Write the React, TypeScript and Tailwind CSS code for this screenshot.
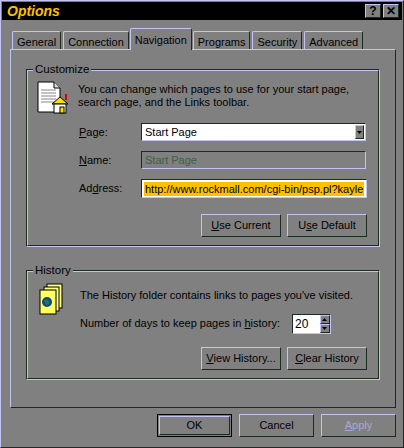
import React from 'react';

const raised = 'border border-t-[#c4c4f4] border-l-[#c4c4f4] border-b-[#1c2c1c] border-r-[#1c2c1c]';
const sunken = 'border border-t-[#1c2c1c] border-l-[#1c2c1c] border-b-[#c4c4f4] border-r-[#c4c4f4]';

const U: React.FC<{ t: string; i: number }> = ({ t, i }) => (
  <>
    {t.slice(0, i)}
    <span className="underline underline-offset-1">{t[i]}</span>
    {t.slice(i + 1)}
  </>
);

const Btn: React.FC<{ children: React.ReactNode; w?: string; bold?: boolean; dim?: boolean }> = ({ children, w = 'w-[80px]', bold, dim }) => (
  <div className={`${w} h-[23px] ${bold ? 'border border-black p-px' : ''}`}>
    <div className={`flex h-full w-full items-center justify-center ${raised} ${dim ? 'text-[#a8a8d8]' : 'text-black'}`}>
      {children}
    </div>
  </div>
);

const Group: React.FC<{ title: string; children: React.ReactNode; h: string }> = ({ title, children, h }) => (
  <div className={`relative ${h} ${sunken}`}>
    <div className={`h-full w-full ${raised}`}>{children}</div>
    <span className="absolute -top-[9px] left-[6px] bg-[#808080] px-[2px] text-[11.5px] leading-[16px]">{title}</span>
  </div>
);

const PageIcon = () => (
  <svg width="34" height="36" viewBox="0 0 34 36">
    <path d="M2 2h16l6 6v24H2z" fill="#fff" stroke="#000" />
    <path d="M18 2v6h6" fill="#ddd" stroke="#000" />
    {[10, 13, 16, 19, 22].map((y) => (
      <line key={y} x1="5" y1={y} x2="20" y2={y} stroke="#888" />
    ))}
    <path d="M16 24l8-7 8 7z" fill="#ffe000" stroke="#000" />
    <rect x="18" y="24" width="12" height="9" fill="#fff" stroke="#000" />
    <rect x="24" y="27" width="4" height="6" fill="#ffe000" stroke="#000" />
    <rect x="29" y="14" width="2" height="6" fill="#e00000" />
  </svg>
);

const HistIcon = () => (
  <svg width="28" height="32" viewBox="0 0 28 32">
    <rect x="9" y="1" width="15" height="24" fill="#ffff80" stroke="#000" />
    <rect x="6" y="4" width="15" height="24" fill="#ffff80" stroke="#000" />
    <rect x="2" y="7" width="16" height="24" fill="#ffff60" stroke="#000" />
    <circle cx="9" cy="19" r="5" fill="#1040a0" />
    <path d="M6 17c2-2 4 0 5 1s0 4-2 4-2-3-3-5z" fill="#208030" />
  </svg>
);

export default function App() {
  return (
    <div className="h-[448px] w-[404px] overflow-hidden bg-[#808080] text-[11px] text-black" style={{ fontFamily: '"Liberation Sans", Arial, sans-serif' }}>
      <div className={`h-[448px] p-px ${raised}`}>
        {/* title */}
        <div className="flex h-[18px] items-center justify-between bg-black pl-[5px] pr-[3px]">
          <span className="text-[14px] font-bold italic text-[#ffc000]">Options</span>
          <div className="flex gap-[2px]">
            <div className={`flex h-[14px] w-[16px] items-center justify-center bg-[#808080] text-[12px] font-bold leading-none ${raised}`}>?</div>
            <div className={`flex h-[14px] w-[16px] items-center justify-center bg-[#808080] text-[12px] font-bold leading-none ${raised}`}>✕</div>
          </div>
        </div>

        {/* tabs */}
        <div className="ml-[9px] mt-[8px] flex h-[21px] items-end">
          {['General', 'Connection', 'Navigation', 'Programs', 'Security', 'Advanced'].map((t) => {
            const sel = t === 'Navigation';
            return (
              <div
                key={t}
                className={`relative rounded-t-[2px] border-l border-r border-t border-l-[#c4c4f4] border-r-[#1c2c1c] border-t-[#c4c4f4] px-[4px] ${
                  sel ? 'z-10 -mb-px h-[22px] bg-[#808080] pt-[3px]' : 'mx-px h-[18px] pt-[2px]'
                }`}
              >
                <span className="text-[11px] leading-[14px]">{t}</span>
              </div>
            );
          })}
        </div>

        {/* panel */}
        <div className={`ml-[8px] h-[359px] w-[386px] px-[15px] pt-[19px] ${raised}`}>
          <Group title="Customize" h="h-[178px]">
            <div className="flex pl-[8px] pt-[9px]">
              <PageIcon />
              <div className="ml-[8px] mt-[3px] leading-[13px]">
                You can change which pages to use for your start page,
                <br />
                search page, and the Links toolbar.
              </div>
            </div>
            <div className="ml-[51px] mt-[7px] flex flex-col gap-[10px] pr-[12px]">
              <div className="flex h-[18px] items-center">
                <span className="w-[62px] shrink-0"><U t="Page:" i={0} /></span>
                <div className={`flex h-[18px] flex-1 items-center bg-white ${sunken}`}>
                  <span className="flex-1 pl-[3px]">Start Page</span>
                  <div className={`mr-px flex h-[14px] w-[9px] items-center justify-center bg-[#808080] ${raised}`}>
                    <svg width="5" height="3"><path d="M0 0h5L2.5 3z" fill="#000" /></svg>
                  </div>
                </div>
              </div>
              <div className="flex h-[18px] items-center">
                <span className="w-[62px] shrink-0"><U t="Name:" i={0} /></span>
                <div className={`flex h-[18px] flex-1 items-center ${sunken}`}>
                  <span className="pl-[3px] text-[#3f5f3f]">Start Page</span>
                </div>
              </div>
              <div className="flex h-[19px] items-center">
                <span className="w-[62px] shrink-0"><U t="Address:" i={2} /></span>
                <div className={`flex h-[19px] flex-1 items-center bg-white px-[2px] ${sunken}`}>
                  <span className="whitespace-nowrap bg-[#ffc000] px-px leading-[14px]">http://www.rockmall.com/cgi-bin/psp.pl?kayle</span>
                </div>
              </div>
            </div>
            <div className="mt-[16px] flex justify-end gap-[6px] pr-[11px]">
              <Btn><U t="Use Current" i={0} /></Btn>
              <Btn><U t="Use Default" i={1} /></Btn>
            </div>
          </Group>

          <div className="h-[23px]" />

          <Group title="History" h="h-[110px]">
            <div className="flex pl-[10px] pt-[11px]">
              <HistIcon />
              <div className="ml-[14px] mt-[4px]">
                <div>The History folder contains links to pages you've visited.</div>
                <div className="mt-[10px] flex items-center">
                  <span>Number of days to keep pages in <U t="history" i={0} />:</span>
                  <div className={`ml-[12px] flex h-[20px] w-[39px] items-center bg-white ${sunken}`}>
                    <span className="flex-1 pl-[2px] text-[12px]">20</span>
                    <div className="flex h-full w-[10px] flex-col bg-[#808080]">
                      <div className={`flex flex-1 items-center justify-center ${raised}`}>
                        <svg width="5" height="3"><path d="M0 3h5L2.5 0z" fill="#000" /></svg>
                      </div>
                      <div className={`flex flex-1 items-center justify-center ${raised}`}>
                        <svg width="5" height="3"><path d="M0 0h5L2.5 3z" fill="#000" /></svg>
                      </div>
                    </div>
                  </div>
                </div>
              </div>
            </div>
            <div className="mt-[13px] flex justify-end gap-[6px] pr-[11px]">
              <Btn><U t="View History..." i={0} /></Btn>
              <Btn><U t="Clear History" i={0} /></Btn>
            </div>
          </Group>
        </div>

        {/* bottom buttons */}
        <div className="mr-[6px] mt-[6px] flex justify-end gap-[7px]">
          <Btn w="w-[75px]" bold>OK</Btn>
          <Btn w="w-[75px]">Cancel</Btn>
          <Btn w="w-[75px]" dim><U t="Apply" i={0} /></Btn>
        </div>
      </div>
    </div>
  );
}
